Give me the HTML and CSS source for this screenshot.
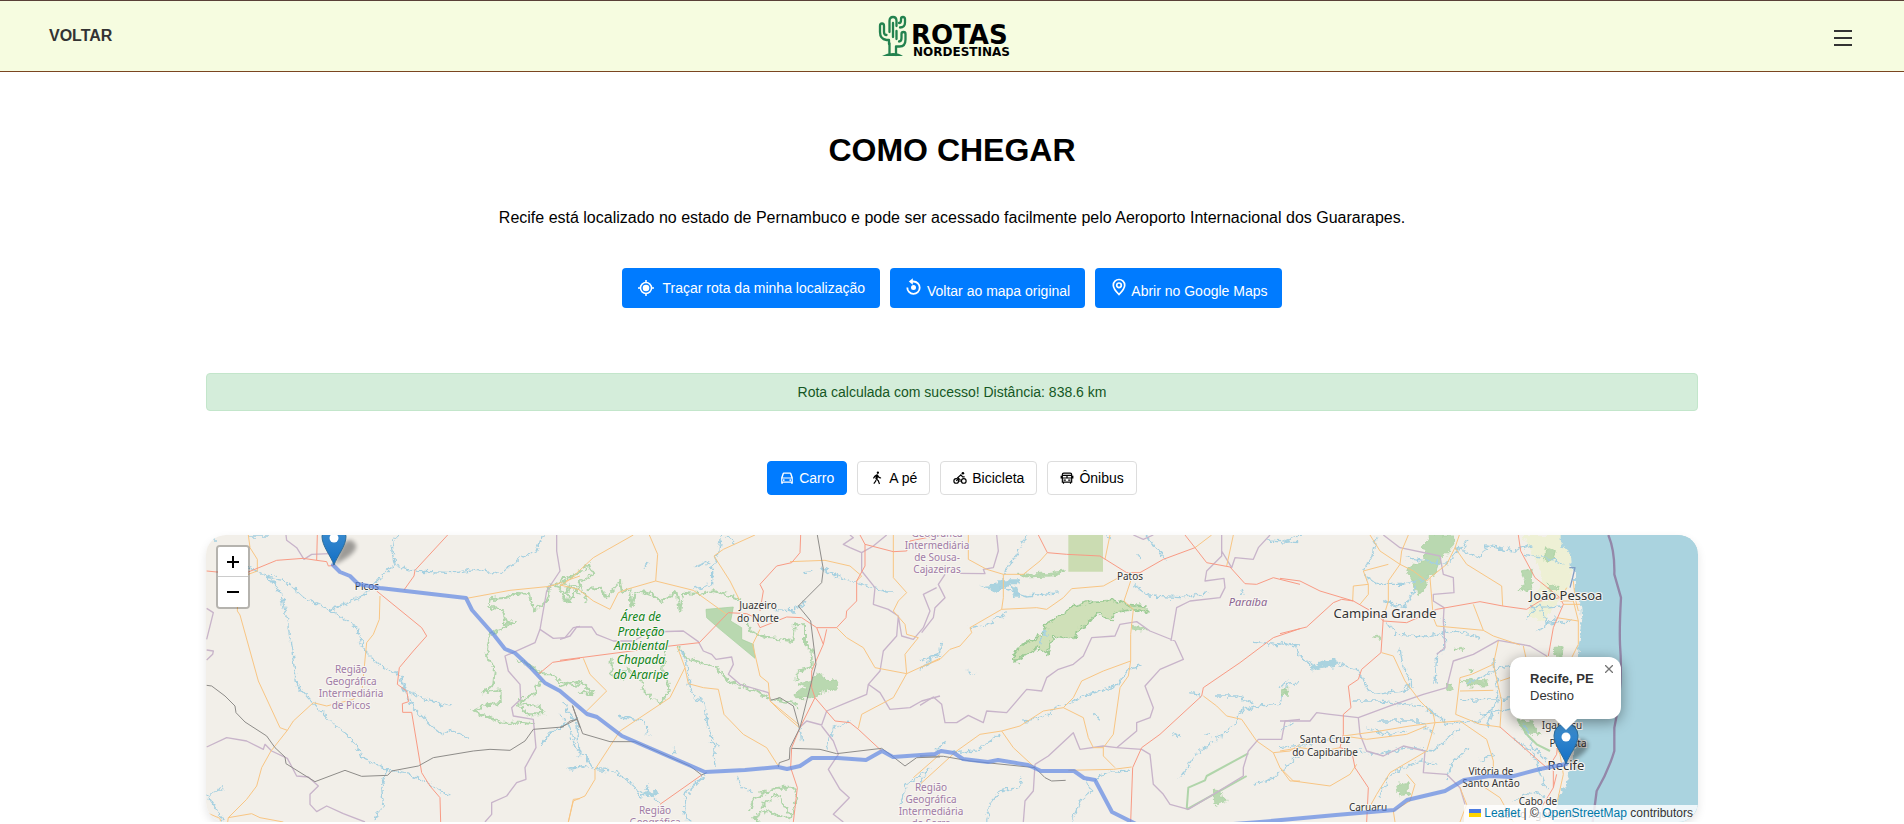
FILE: index.html
```html
<!DOCTYPE html>
<html lang="pt-BR">
<head>
<meta charset="utf-8">
<title>Rotas Nordestinas - Como chegar</title>
<link rel="stylesheet" href="styles.css">
</head>
<body>
<header class="topbar">
  <a class="back" href="#">VOLTAR</a>
  <a class="logo" href="#" aria-label="Rotas Nordestinas">
    <svg width="136" height="44" viewBox="0 0 136 44">
      <g fill="none" stroke="#23824f" stroke-width="2.3" stroke-linecap="round" stroke-linejoin="round">
        <path d="M12 30v-4H9.500Q3 25 3 18v-6q0-2.500 2-2.500t2 2.500v6q0 3 2.500 3"/>
        <path d="M12.500 18V7q0-4 3.500-4t3.500 4v5"/>
        <path d="M16 9v14M19.500 17v8"/>
        <path d="M23 13.500q5 0 5-5V5q0-2-2-2t-2 2v1.500q0 2.500-2 2.500"/>
        <path d="M12.500 29.500V40M19 41v-8.500h3.500q6 0 6-7V20q0-2-2-2t-2 2v4q0 3.500-2.500 3.500"/>
      </g>
      <path d="M5 42q5-3 11-3t10 3z" fill="#23824f"/>
      <text class="logo-big" x="34" y="30">ROTAS</text>
      <text class="logo-small" x="36" y="42">NORDESTINAS</text>
    </svg>
  </a>
  <button class="menu" type="button" aria-label="Menu"><span></span><span></span><span></span></button>
</header>

<main class="page">
  <h1>COMO CHEGAR</h1>
  <p class="intro">Recife está localizado no estado de Pernambuco e pode ser acessado facilmente pelo Aeroporto Internacional dos Guararapes.</p>

  <div class="actions">
    <button class="action action-flex" type="button"><svg width="18" height="18" viewBox="0 0 18 18"><g fill="none" stroke="currentColor" stroke-width="1.500"><circle cx="9" cy="9" r="5.500"/><path d="M9 1v3M9 14v3M1 9h3M14 9h3"/></g><circle cx="9" cy="9" r="3.300" fill="currentColor"/></svg>Traçar rota da minha localização</button>
    <button class="action" type="button"><svg width="18" height="18" viewBox="0 0 18 18"><path d="M6.500 3.500H8.500A6.200 6.200 0 1 1 2.300 9.500" fill="none" stroke="currentColor" stroke-width="1.800"/><path d="M7.800 .3v6.400L3.800 3.500z" fill="currentColor"/><circle cx="8.500" cy="9.600" r="2.500" fill="currentColor"/></svg> Voltar ao mapa original</button>
    <button class="action" type="button"><svg width="18" height="18" viewBox="0 0 18 18"><path d="M9 16.500Q3.300 10.800 3.300 7.200a5.700 5.700 0 0 1 11.400 0Q14.700 10.800 9 16.500z" fill="none" stroke="currentColor" stroke-width="1.700"/><circle cx="9" cy="7.300" r="2.300" fill="none" stroke="currentColor" stroke-width="1.700"/></svg> Abrir no Google Maps</button>
  </div>

  <div class="notice" role="status">Rota calculada com sucesso! Distância: 838.6 km</div>

  <div class="modes">
    <button class="mode active" type="button"><svg width="14" height="14" viewBox="0 0 24 24"><path fill="currentColor" d="M19 20H5v1a1 1 0 0 1-1 1H3a1 1 0 0 1-1-1V11l2.500-7.200A2 2 0 0 1 6.400 2.500h11.200a2 2 0 0 1 1.900 1.300L22 11v10a1 1 0 0 1-1 1h-1a1 1 0 0 1-1-1zM4 13v5h16v-5zm.6-2h14.800l-2.200-6.500H6.800zM6.500 17a1.500 1.500 0 1 1 0-3 1.500 1.500 0 0 1 0 3m11 0a1.500 1.500 0 1 1 0-3 1.500 1.500 0 0 1 0 3"/></svg>Carro</button>
    <button class="mode" type="button"><svg width="14" height="14" viewBox="0 0 24 24"><path fill="currentColor" d="m7.600 8.200 3-2.200q.7-.5 1.400-.5 1.500 0 2 1.200l.8 2q1.400 2.300 4.200 2.300v2q-3.500 0-5.500-2.500l-.6 3.500 2.100 1.800 2.200 6.200-1.900.7-2-5.700-3.500-2.900q-.8-.7-.6-1.700l.6-2.800-1 .8-2.100 2.900-1.600-1.200zM13.500 5a2 2 0 1 1 0-4 2 2 0 0 1 0 4m-3 13.200-3.200 3.900-1.600-1.300 3-3.600.8-2.300 1.800 1.500z"/></svg>A pé</button>
    <button class="mode" type="button"><svg width="14" height="14" viewBox="0 0 24 24"><g fill="none" stroke="currentColor" stroke-width="2"><circle cx="5.500" cy="17" r="4"/><circle cx="18.500" cy="17" r="4"/><path d="M12 19v-4.500L8 11.500l5.500-5 3 3.500H20M5.500 17l4-3.500"/></g><circle cx="17" cy="4" r="2.200" fill="currentColor"/></svg>Bicicleta</button>
    <button class="mode" type="button"><svg width="14" height="14" viewBox="0 0 24 24"><path fill="none" stroke="currentColor" stroke-width="2" d="M4 19V6q0-2.500 2.500-2.500h11Q20 3.500 20 6v13zM4 12h16M4 7.500h16M12 7.500V12M6 19v3M18 19v3M2 8v5M22 8v5"/><path fill="currentColor" d="M6 14.500h4v2H6zM14 14.500h4v2h-4z"/></svg>Ônibus</button>
  </div>

  <section class="map" aria-label="Mapa da rota">
    <svg class="tiles" viewBox="206 534 1492 287" preserveAspectRatio="xMaxYMid slice">
      <defs>
        <filter id="rough" x="-5%" y="-5%" width="110%" height="110%" color-interpolation-filters="sRGB">
          <feTurbulence type="fractalNoise" baseFrequency="0.06" numOctaves="3" seed="4"/>
          <feDisplacementMap in="SourceGraphic" scale="24" xChannelSelector="R" yChannelSelector="G"/>
        </filter>
        <linearGradient id="pin" x1="0" y1="0" x2="0" y2="1"><stop offset="0" stop-color="#4190cf"/><stop offset="1" stop-color="#126fc6"/></linearGradient>
        <filter id="soft" x="-50%" y="-50%" width="200%" height="200%"><feGaussianBlur stdDeviation="2"/></filter>
        <g id="marker">
          <path d="M0 0 8-20Q16-30 22-20 24-12 0 0z" fill="#000" opacity=".35" filter="url(#soft)"/>
          <path d="M0 0C-3-9-12-19-12-28.500a12 12 0 0 1 24 0C12-19 3-9 0 0z" fill="url(#pin)" stroke="#2e6c97"/>
          <circle cy="-27" r="4.500" fill="#fff"/>
        </g>
      </defs>
      <rect class="land" x="206" y="534" width="1492" height="287"/>

      <!-- west -->
      <g transform="translate(200 520) scale(.33333)">
        <g filter="url(#rough)">
          <path class="park-line" d="M1140 225 1110 190 1100 245 1080 200 1050 190 1040 240 1000 270 990 220 950 215 920 230 870 235 865 260 905 265 915 310 945 300 905 325 870 340 860 390 865 420 885 440 880 490 850 515 905 505 905 545 860 550 820 570 870 590 900 605 960 605 1005 610M950 415 1000 440 1020 460 1060 460 1080 485 1140 495M1020 480 1000 520 950 545 980 580 1030 580 1020 555 960 550M1060 195 1080 180 1110 165 1140 150"/>
          <path class="river" d="M150 140 200 165 240 210 260 290 270 350 280 420 290 490 340 545 400 610 450 650 490 710 560 745 630 760 690 790 745 825M200 165 250 175 320 235 390 268 470 320 495 390 540 435 600 460 620 510 690 540 755 555M390 268 430 250 490 225 530 180 585 130 575 60 600 40M585 130 640 150 760 155 830 145 900 160 960 110 1010 90 1030 40M600 475 640 560 700 620 730 645 750 625 810 655M560 745 545 800 550 850 525 900M145 45 210 45M20 825 60 880 70 905M20 825 70 800M20 60 50 60M1095 540 1100 570 1130 600 1140 700M1095 610 1050 635 1020 675M1100 745 1140 738"/>
        </g>
        <path class="border" d="M258 42 260 58 290 80 312 115 335 100 390 98M1070 42 1070 90 1080 150 1060 180 1040 210 1020 325 1005 365 945 392 915 405 925 450 960 490 962 535 935 560 940 585 1000 595 1008 680 975 740 978 775 950 785 920 825 875 845 875 880 855 903M1020 325 1060 352 1095 350 1120 320 1140 316M20 262 40 275 20 355M20 387 40 390 38 400 20 417M20 678 80 650 140 660 190 685 195 670 215 690 262 712 290 765 325 768 355 795 330 820 330 850 350 872 380 855 430 878 495 903"/>
        <path class="minor" d="M145 42 150 80 172 115 172 150 145 160 115 180 112 270 120 282 175 480 240 620 262 628 213 690 185 740 170 795 140 835 85 890 83 903M262 628 280 600 340 545 380 555 460 535 487 500 497 395 500 365 520 340 538 295 540 225M20 875 60 892 62 903M85 890 155 878 180 890 250 903M800 232 930 208 1050 196 1140 165M1105 903 1120 835 1140 833"/>
        <path class="major" d="M20 150 50 153 145 153 230 118 310 112 350 118 380 122 385 135 402 133M352 42 350 118M743 42 645 148 642 165 612 207M530 210 665 320 680 345 640 390 598 440 592 490 620 510 626 542 607 548 608 574 635 574 665 755 690 795 720 830 722 903M1140 412 1058 424 1015 460"/>
        <path class="rail" d="M20 493 35 495 75 525 105 555 108 575 135 603 200 645 225 680 255 708 258 728 345 782 435 748 485 766 563 763 575 750 655 735 700 710 820 690 870 685 930 688 975 660 1000 625 1088 618 1110 600 1132 595M1117 553 1140 620"/>
      </g>

      <!-- Araripe -->
      <g transform="translate(560 520) scale(.33333)">
        <path class="forest" d="M438 265 520 258 512 300 545 320 545 355 580 370 585 412 480 325 440 290z"/>
        <g filter="url(#rough)">
          <path class="forest" d="M715 490 755 480 770 455 800 475 835 478 830 505 780 515 755 530 710 530 705 515 745 500z"/>
          <path class="park-line" d="M0 195 30 170 60 155 90 130 100 160 65 180 30 240 10 240 20 200 60 190 80 240M80 205 120 200 140 230 180 180 185 210 210 205 215 260 225 210 280 220 300 240 350 215 360 275 370 215 420 220 460 210 510 225 540 235M560 290 570 330 620 350 700 360 705 310 735 310 735 370 755 390 755 440 710 450 710 480M355 380 380 410 470 440 500 480 600 515 635 535 700 545 715 565M155 410 155 460 190 470 200 440 245 480 250 510 300 550 320 520 330 490 310 450 315 385M0 495 60 480 100 520 60 515M570 870 580 830 650 800 700 800 712 830 690 895 620 870 580 890 600 903M600 860 650 820 690 880"/>
          <path class="river" d="M485 42 475 100 455 140 455 190 400 205M400 140 445 125M265 120 255 140M360 385 380 420 385 470 400 530 435 540 440 600 460 660 465 740M450 660 480 680M500 45 530 75M175 585 255 600 265 640M0 575 30 620 45 680 80 710 100 745 160 750 220 790 240 825 290 820M260 790 270 820 300 845M30 745 80 735M435 760 375 820 370 880 390 903M530 765 545 800 575 815M720 620 725 660M340 680 345 700M640 265 700 270 740 240M780 140 840 170 940 200 980 210 1000 210M730 155 760 152M1100 750 1040 790 1020 850M800 690 820 620 870 600M1140 400 1080 420"/>
          <path class="water" d="M235 812 290 810 285 828 260 822z"/>
        </g>
        <path class="border" d="M0 355 30 345 50 318 95 318 110 340 160 360 220 360 270 333 370 330 415 362 430 390 455 400 468 415 515 408 520 430 505 460 540 490 625 515 632 538M718 620 740 600 785 612 800 570 860 545 920 520 925 490 960 450 970 390 1010 345 1015 285 985 265 940 250 945 200 905 150 905 95 940 75 980 42M925 490 960 515 990 565 1050 560 1085 540 1140 525M785 615 820 660 835 700 805 745 840 805 868 830 820 880 850 903M905 95 870 80 850 70 880 50 870 42M1015 285 1025 345 1060 355 1090 320 1110 270 1090 220 1130 200"/>
        <path class="minor" d="M0 195 30 175 100 110 220 42M268 42 293 100 287 180 200 205 175 215 150 265 100 240 55 205 0 192M287 180 400 208 500 280M545 250 510 180 462 105 490 85 585 42M690 122 795 118 870 135 905 165 890 180M1000 42 1000 170 1040 215 1015 240 1000 270 1035 310 1040 340 1075 350M830 320 860 350 910 380 945 440 1040 458 1140 412M1075 350 1035 400 1040 458 1000 530 905 580 895 622M600 325 578 370 600 465 625 485 630 540 718 612M630 540 660 570 718 620M70 412 90 460 140 510 80 570M352 378 375 440 330 530 180 630 105 745 105 775 75 825 40 840 25 903M375 440 385 488 430 500 475 505 492 580 550 640 620 680 655 735M1060 770 1140 700"/>
        <path class="major" d="M0 418 330 375 418 365 505 275 560 278 585 290 600 320 680 288 725 290 770 320 830 320 858 290 860 270 890 240 890 180 915 135 915 70 900 42M722 42 720 95 695 125 650 135 600 190 610 210 600 270M915 70 1000 92 1040 90 1050 60 1140 42M770 320 790 370 755 450 755 500 765 530 720 620 695 680 692 740 712 800 700 903M800 325 790 370M765 530 825 600 870 605 895 625 965 690M425 762 300 850"/>
        <path class="rail" d="M772 42 790 145 785 185 715 255 752 300 768 430 750 500 720 620 690 680 688 715 658 725 655 738M695 682 780 685 830 698 965 682 990 700 1035 735 1070 710 1140 708M632 538 660 530 700 555 718 620M38 555 68 638 150 662 225 662 390 735 425 762 440 755M0 620 50 595"/>
      </g>

      <!-- Paraíba -->
      <g transform="translate(920 520) scale(.33333)">
        <path class="wood" d="M445 42H549V152H445z"/>
        <g filter="url(#rough)">
          <path class="park" d="M275 410 300 375 360 345 380 320 370 312 410 290 450 260 500 242 590 238 620 250 680 255 680 275 640 265 580 275 580 295 550 290 530 275 505 310 470 325 465 355 400 345 380 400 350 380 300 410 290 425z"/>
          <path class="forest" d="M295 160 350 158 435 150 400 165 310 168zM880 810 900 812 905 835 925 835 885 850zM635 315 685 325 660 330 640 325zM1088 505 1100 500 1102 520 1090 520z"/>
          <path class="water" d="M180 195 240 190 230 175 300 175 295 190 270 190 300 210 300 230 285 230 270 195 230 210zM365 330 380 330 380 345 370 345z"/>
          <path class="river" d="M320 42 290 100 250 160M240 200 320 225 420 215M0 450 60 390 65 360M150 320 200 310 260 275M570 60 560 42M680 42 720 100 740 115M640 190 690 225 780 230 865 215M430 555 500 520 590 495 630 440 665 435M650 100 660 110M415 555 370 590 310 600M240 640 170 690 100 695M45 690 80 655M0 790 30 740M305 770 295 800 240 810 210 850 200 903M500 780 515 810 480 840 455 903M520 780 560 755 630 750M780 770 830 700 950 605 960 570 1020 555 1080 550 1100 490 1140 485M880 525 950 525 1000 548M1000 360 1060 370 1140 375M760 640 780 645M850 635 870 645M810 515 840 522M960 200 970 225M520 580 540 595M140 450 165 460M1000 790 1060 770 1140 700M365 340 360 370M1040 60 1140 65"/>
        </g>
        <path class="park-line" d="M985 697 860 765 855 778 805 800 800 865 M800 865 900 810 980 765"/>
        <path class="border" d="M230 42 235 90 220 140 190 145 195 158 120 157M75 160 55 190 75 230 45 260 40 290 5 335M0 553 40 528 65 550 75 605 110 605 145 583 190 605 200 570 260 575 320 505 365 510 380 470 415 445 460 430 490 405 515 350 585 345 600 310 650 302 690 330 765 360 790 415 720 445 675 495 700 560 690 590 650 605 650 630 590 680 665 685 690 700 700 790 730 820 750 850 805 865 880 820 970 765 970 740 985 690 1015 655 1085 655 1095 600 1140 595M345 730 385 705 460 635 480 685 550 675 590 680M345 730 340 810 315 840 310 903M753 360 770 260 810 240 900 230 915 200 912 172 855 180 860 150 905 105 905 42M640 42 670 55 700 42M905 90 935 140 945 110 1000 115 1015 80 1050 42"/>
        <path class="minor" d="M145 42 145 115 200 145 250 160 250 230 245 265 150 320 155 335 120 375 90 385 60 415 0 440M245 265 350 260 380 265 430 230 455 203 550 195 592 172M250 160 310 160 360 120 382 95M570 42 555 115M632 180 612 240 640 265 632 340 632 420 625 465 600 500 580 640 550 680 550 705 585 740M632 420 550 450 485 480 460 530 430 560 370 570 300 615 245 630 180 640 110 690 0 790M430 560 490 590 505 650 520 680 550 680M245 630 280 680 345 740M445 748 580 745 635 738M875 42 825 80M940 42 920 135M850 525 890 555 920 585 965 595 1010 660 1060 695 1110 690 1140 670M1060 695 1080 740 1110 780 1140 780"/>
        <path class="major" d="M355 42 382 95 440 100 540 105 620 155 660 155 730 115 825 80 860 125 930 138 975 188 1010 190 1060 170 1140 190M795 42 825 80M1140 323 1060 350 960 425 850 500 845 525 720 640 665 680 638 740 632 903"/>
        <path class="rail" d="M0 705 70 706 150 720 345 740 375 770 395 780 437 778"/>
      </g>

      <!-- coast -->
      <g transform="translate(1280 520) scale(.33333)">
        <g filter="url(#rough)">
          <path class="crops" d="M725 42H842L850 75 872 100 872 190 790 300 740 290 760 220 790 180 760 100z"/>
          <path class="forest" d="M430 80 450 42 520 42 525 70 480 115 470 160 445 165 440 200 410 225 400 180 380 150 400 130 440 120zM720 150 760 145 755 205 720 210 735 180zM545 475 625 480 620 495 560 495zM710 595 750 600 780 640 740 640zM350 790 385 785 385 820 355 825zM825 380 850 375 845 410 830 405zM280 348 305 345 300 355zM525 385 555 380 550 392zM500 490 515 490 520 505 500 510zM5 505 20 505 15 525 5 520zM800 80 825 90 820 115 790 120zM570 440 580 440 575 455zM800 185 835 200 820 215z"/>
          <path class="river" d="M5 65 60 42M290 42 275 110 250 150M445 170 370 190 290 190 250 160M525 80 600 110 620 75 700 90 760 70M560 60 500 130 380 110M730 100 800 110 850 130M410 200 370 260 310 240M0 365 50 375 60 410 100 430M30 470 0 500M170 425 240 450 260 500 285 520 370 510 390 490M325 305 350 340 440 345 530 330 600 350M490 290 495 390 470 400 465 490M360 385 370 440 400 500M220 540 300 540 440 560 500 610 600 600 640 560M295 600 420 600 460 640M240 690 300 700 380 680 460 690 540 620M640 410 655 520 620 620M740 290 780 250 800 310 870 300M750 260 850 255M770 330 830 290M540 540 700 530M600 580 720 560M0 630 40 600M0 680 80 670 170 650M500 780 520 720 570 680M300 830 330 760 420 720 470 730M600 720 640 700M560 490 640 450 700 430M730 610 760 680 800 720M700 650 760 700 800 800M700 840 760 810 790 830M380 630 320 640 260 620"/>
          <path class="water" d="M90 435 130 420 170 415 165 435 130 440 90 450z"/>
          <path class="sea" d="M842 10 842 60 850 80 870 100 872 135 885 150 885 200 900 240 905 320 895 380 898 420 880 620 885 680 860 780 835 830 820 930 1254 930V10z"/>
        </g>
        <path class="sea" d="M960 42H1254V903H960z"/>
        <path class="park-line" d="M712 595 740 640 770 670 810 690"/>
        <path class="border" d="M310 42 360 80 480 105 490 160 520 170 522 215 460 220 460 240 492 260 490 300 495 380 470 400M0 600 90 600 110 575 150 580 235 590 330 555 430 520 500 500 520 420 580 400 655 358 750 375 800 405M235 590 240 640 260 690 310 705 370 675 435 690 430 755 500 760 540 800 555 850"/>
        <path class="sea-border" d="M985 42Q1005 90 1003 160L1023 230Q1018 320 1020 370 1030 500 1003 620L1003 690Q985 750 950 810L938 903"/>
        <path class="minor" d="M270 42 300 90 360 130 365 90 385 42M538 42 525 80 500 130 450 170 440 180 400 150 360 130 325 180 325 240 310 290M525 80 560 130 665 195 668 255M450 170 460 290 470 315 610 328 640 345 720 372M580 250 610 328M325 130 250 150 265 190 265 220 240 250M265 190 220 195 218 240M305 395 340 405 375 480 420 540 460 580 465 605M655 360 640 430 575 460 540 470 527 580 600 610 660 618M640 430 665 540 660 620M540 510 640 508M730 375 740 420 690 470 660 480M465 605 390 615 300 630 190 645M465 605 440 690 330 755 290 820 265 865M465 605 540 600 620 655 640 720 640 770M190 645 260 655 380 640 440 615M0 690 60 680 130 690 180 680M0 740 40 780 150 795 210 760 230 730M380 760 405 790 390 840 340 870 345 903M840 240 880 240 895 300 895 370 870 420 870 600M830 290 895 300M840 240 860 200M850 250 900 250M800 405 810 450M540 800 560 850 540 903M600 790 660 830 700 903M820 660 840 700 850 760 830 850M880 180 885 230 895 270"/>
        <path class="major" d="M715 42 722 90 765 170 840 230 850 250 820 320 805 405M0 172 60 180 120 210 220 240 290 280 310 300 380 305 470 265 600 242 668 255 740 265 780 240 840 230M0 338 80 318 160 245 185 235 220 240M310 290 303 395 245 445 235 475 205 495 213 560 190 580 190 640 180 680 215 690 225 740 265 800 260 903M660 618 720 670 800 740 820 740 820 800 790 850 780 903M805 740 830 700 835 650M820 800 830 760"/>
        <path fill="none" stroke="#7f9cc4" stroke-width="4" d="M868 140 885 140 878 170 870 200"/>
      </g>

      <g class="labels">
        <text x="367" y="589">Picos</text>
        <g class="region"><text x="351" y="672">Região</text><text x="351" y="684">Geográfica</text><text x="351" y="696">Intermediária</text><text x="351" y="708">de Picos</text></g>
        <g class="region"><text x="655" y="813">Região</text><text x="655" y="825">Geográfica</text></g>
        <g class="region"><text x="937" y="536">Geográfica</text><text x="937" y="548">Intermediária</text><text x="937" y="560">de Sousa-</text><text x="937" y="572">Cajazeiras</text></g>
        <g class="region"><text x="931" y="790">Região</text><text x="931" y="802">Geográfica</text><text x="931" y="814">Intermediária</text><text x="931" y="826">de Serra</text></g>
        <g class="protected"><text x="641" y="620">Área de</text><text x="641" y="635">Proteção</text><text x="641" y="649">Ambiental</text><text x="641" y="663">Chapada</text><text x="641" y="678">do Araripe</text></g>
        <text x="758" y="608">Juazeiro</text><text x="758" y="621">do Norte</text>
        <text x="1130" y="579">Patos</text>
        <text class="state" x="1248" y="605">Paraíba</text>
        <text class="city" x="1385" y="617">Campina Grande</text>
        <text class="city" x="1566" y="599">João Pessoa</text>
        <text x="1325" y="742">Santa Cruz</text><text x="1325" y="755">do Capibaribe</text>
        <text x="1491" y="774">Vitória de</text><text x="1491" y="786">Santo Antão</text>
        <text x="1368" y="810">Caruaru</text>
        <text x="1538" y="804">Cabo de</text><text x="1538" y="817">Santo Agostinho</text>
        <text x="1562" y="728">Igarassu</text><text x="1568" y="746">Paulista</text>
        <text class="city" x="1566" y="769">Recife</text>
      </g>

      <path class="route" d="M333 564 340 571 350 575 358 583 380 587 466 597 472 609 494 634 505 648 515 652 530 666 545 682 560 690 580 707 587 713 597 716 622 735 705 771 745 769 778 766 787 768 800 765 812 757 838 757 866 759 882 750 893 756 935 753 941 750 954 752 963 758 988 761 998 759 1028 764 1041 770 1074 770 1084 777 1095 779 1112 811 1140 825 1220 824 1260 821 1336 814 1394 809 1407 799 1445 790 1464 779 1490 775 1510 776 1540 768 1566 763"/>
      <use href="#marker" x="334" y="564"/>
      <use href="#marker" x="1566" y="763"/>
    </svg>

    <div class="zoom">
      <button type="button" aria-label="Aproximar"><svg width="12" height="12" viewBox="0 0 12 12"><path d="M6 0v12M0 6h12" stroke="#000" stroke-width="2"/></svg></button>
      <button type="button" aria-label="Afastar"><svg width="12" height="12" viewBox="0 0 12 12"><path d="M0 6h12" stroke="#000" stroke-width="2"/></svg></button>
    </div>

    <div class="popup">
      <strong>Recife, PE</strong><br>Destino
      <button class="close" type="button" aria-label="Fechar"><svg width="8" height="8" viewBox="0 0 8 8"><path d="M0 0 8 8M8 0 0 8" stroke="#757575" stroke-width="1.300"/></svg></button>
    </div>

    <div class="credits">
      <svg width="12" height="8" viewBox="0 0 12 8"><path fill="#4c7be1" d="M0 0h12v4H0z"/><path fill="#ffd500" d="M0 4h12v4H0z"/></svg>
      <a href="#">Leaflet</a> | © <a href="#">OpenStreetMap</a> contributors
    </div>
  </section>
</main>
</body>
</html>
```
FILE: styles.css
```css
* { box-sizing: border-box; }

body {
  margin: 0;
  background: #fff;
  color: #000;
  font-family: "Liberation Sans", Arial, sans-serif;
  overflow-x: hidden;
}

button { font-family: inherit; cursor: pointer; }

.topbar {
  display: grid;
  grid-template-columns: 1fr auto 1fr;
  align-items: center;
  height: 72px;
  padding: 0 49px;
  background: #f6fce0;
  border-top: 1px solid #5a4038;
  border-bottom: 1px solid #7a4520;
}
.back {
  color: #333;
  font-size: 16px;
  font-weight: bold;
  text-decoration: none;
}
.logo { display: block; margin-right: 14px; }
.logo svg { display: block; }
.logo-big, .logo-small { font-family: "DejaVu Sans", sans-serif; font-weight: bold; }
.logo-big { font-size: 26px; }
.logo-small { font-size: 12px; }
.menu {
  justify-self: end;
  display: flex;
  flex-direction: column;
  gap: 5px;
  margin: 4px 3px 0 0;
  padding: 0;
  border: 0;
  background: none;
}
.menu span { width: 18px; height: 2px; background: #333; }

.page {
  display: flex;
  flex-direction: column;
  align-items: center;
  padding: 60px 206px 0;
}
h1 { margin: 0; font-size: 32px; line-height: 36px; }
.intro { margin: 40px 0 0; font-size: 16px; line-height: 20px; text-align: center; }

.actions { display: flex; gap: 10px; margin-top: 40px; }
.action {
  height: 40px;
  padding: 0 15px;
  border: 0;
  border-radius: 4px;
  background: #007bff;
  color: #fff;
  font-size: 14px;
}
.action-flex { display: flex; align-items: center; gap: 8px; }

.notice {
  width: 100%;
  margin-top: 65px;
  padding: 10px;
  border: 1px solid #c3e6cb;
  border-radius: 4px;
  background: #d4edda;
  color: #155724;
  font-size: 14px;
  line-height: 16px;
  text-align: center;
}

.modes { display: flex; gap: 10px; margin-top: 50px; }
.mode {
  display: flex;
  align-items: center;
  gap: 5px;
  height: 34px;
  padding: 0 12px;
  border: 1px solid #ddd;
  border-radius: 4px;
  background: #fff;
  color: #000;
  font-size: 14px;
}
.mode.active { border-color: #007bff; background: #007bff; color: #fff; }

.map {
  position: relative;
  width: 100%;
  height: 287px;
  margin-top: 40px;
  overflow: hidden;
  border-radius: 20px;
  box-shadow: 0 4px 10px rgba(0, 0, 0, .1);
}
.tiles { display: block; width: 100%; height: 100%; }
.tiles path { stroke-linejoin: round; }
.land { fill: #f2efe9; }
.sea, .water { fill: #aad3df; }
.forest { fill: #b9d8b0; stroke: #a3cf9b; stroke-width: 2; }
.park { fill: #cfe0b8; stroke: #9ccb95; stroke-width: 5; }
.wood { fill: #cbdcb2; }
.crops { fill: #eef0d5; }
.park-line { fill: none; stroke: #b0d5aa; stroke-width: 6; }
.river { fill: none; stroke: #a5d0e0; stroke-width: 4; }
.border { fill: none; stroke: #c8b4ca; stroke-width: 4; }
.sea-border { fill: none; stroke: #9387a9; stroke-width: 7; }
.minor { fill: none; stroke: #f8c583; stroke-width: 3; }
.major { fill: none; stroke: #f89a84; stroke-width: 3; }
.rail { fill: none; stroke: #8e8c89; stroke-width: 3; }
.route {
  fill: none;
  stroke: #5f87e2;
  stroke-width: 4;
  stroke-linecap: round;
  opacity: .7;
}

.labels {
  fill: #333;
  font-family: "Noto Sans", sans-serif;
  font-size: 10px;
  text-anchor: middle;
  paint-order: stroke;
  stroke: #f8f6f2;
  stroke-width: 2px;
}
.region { fill: #a07ba5; }
.protected { fill: #108418; font-size: 12px; font-style: italic; }
.state { fill: #8a6490; font-size: 11px; font-style: italic; }
.city { font-size: 13px; }

.zoom {
  position: absolute;
  top: 10px;
  left: 10px;
  border: 2px solid rgba(0, 0, 0, .25);
  border-radius: 4px;
  background-clip: padding-box;
}
.zoom button {
  display: grid;
  place-items: center;
  width: 30px;
  height: 30px;
  padding: 0;
  border: 0;
  background: #fff;
}
.zoom button:first-child { border-bottom: 1px solid #ccc; border-radius: 2px 2px 0 0; }
.zoom button:last-child { border-radius: 0 0 2px 2px; }

.popup {
  position: absolute;
  top: 122px;
  right: 77px;
  width: 111px;
  padding: 13px 20px 15px;
  border-radius: 12px;
  background: #fff;
  box-shadow: 0 3px 14px rgba(0, 0, 0, .4);
  color: #333;
  font-size: 13px;
  line-height: 17px;
  white-space: nowrap;
}
.popup::after {
  content: "";
  position: absolute;
  top: 100%;
  left: 50%;
  margin-left: -11px;
  border: 11px solid transparent;
  border-top-color: #fff;
  border-bottom: 0;
}
.close {
  position: absolute;
  top: 8px;
  right: 8px;
  display: grid;
  padding: 0;
  border: 0;
  background: none;
}

.credits {
  position: absolute;
  right: 0;
  bottom: 0;
  padding: 0 5px;
  background: rgba(255, 255, 255, .8);
  color: #333;
  font-size: 12px;
  line-height: 17px;
}
.credits a { color: #0078a8; text-decoration: none; }
```
